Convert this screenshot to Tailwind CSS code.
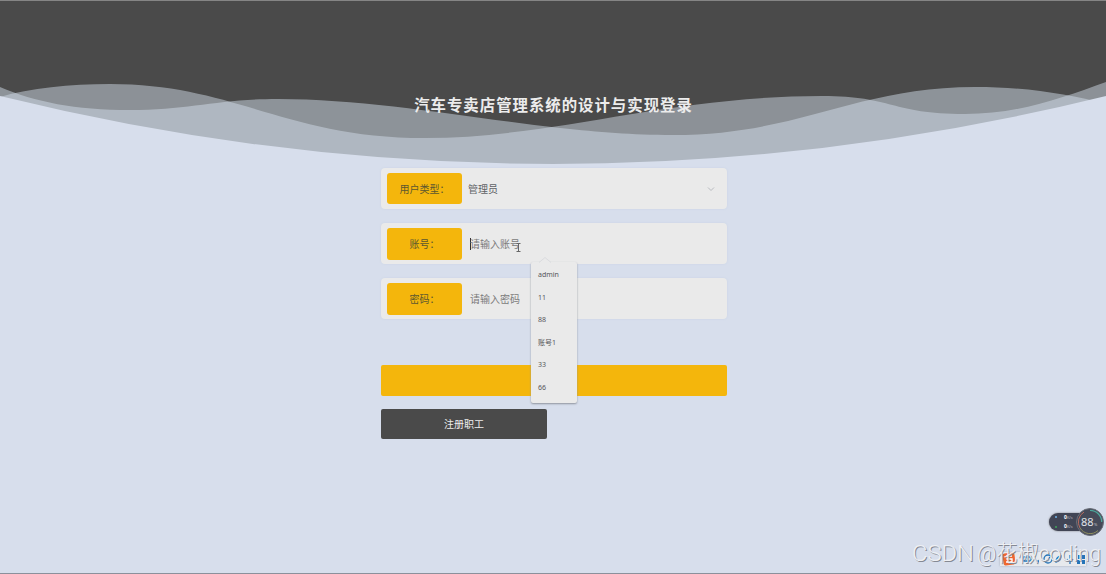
<!DOCTYPE html>
<html lang="zh-CN">

<head>
    <meta charset="UTF-8">
    <meta name="viewport" content="width=device-width, initial-scale=1.0">
    <title>汽车专卖店管理系统的设计与实现登录</title>
    <script src="https://cdn.jsdelivr.net/npm/@tailwindcss/browser@4"></script>
</head>

<body class="relative h-[574px] overflow-hidden bg-[#d7deec] font-['Noto_Sans','Noto_Sans_CJK_SC',sans-serif] text-[10px] text-[#606266]">

    <!-- Wave background -->
    <svg class="absolute inset-0" width="1106" height="574" viewBox="0 0 1106 574">
        <rect width="1106" height="180" fill="#4a4a4a" />
        <path fill="#d5e0ec" fill-opacity=".49" d="M0 87C35 102 75 110 130 110C190 110 218 99 278 99C370 99 470 118 560 128C600 132 630 135 673 135C800 135 855 87 975 87C1025 87 1068 94 1106 104V180H0Z" />
        <path fill="#d5e0ec" fill-opacity=".48" d="M0 97C30 88 70 84 110 84C235 84 285 138 425 138C555 138 665 96 822 96C894 96 890 114 965 114C1020 114 1064 97 1106 82V180H0Z" />
        <path fill="#d7deec" d="M0 96Q553 232 1106 96V181H0Z" />
        <path fill="#858585" d="M0 0H1106V1H0Z" />
        <path fill="#8b909b" d="M0 573H1106V574H0Z" />
    </svg>

    <!-- Login form -->
    <main class="relative ml-[381px] flex w-[346px] flex-col pt-[95px]">
        <h1 class="-ml-px self-center whitespace-nowrap text-[15.4px] leading-[22px] font-bold tracking-[1px] text-[#ececec]">汽车专卖店管理系统的设计与实现登录</h1>

        <div class="mt-[51px] flex flex-col gap-[14px]">
            <div class="flex h-[41px] items-center rounded-[4px] bg-[#eaeaea] px-[6px] shadow-[0_0_2px_#c9d2e4]">
                <label class="flex h-[31px] w-[75px] items-center justify-center rounded-[3px] bg-[#f4b60c] pt-px text-[#5b5630]">用户类型：</label>
                <span class="flex-1 pt-[2px] pl-[6px]">管理员</span>
                <svg class="mr-[6px]" width="8" height="6" viewBox="0 0 8 6" fill="none" stroke="#b9bbc0">
                    <path d="M1 1.5L4 4.5L7 1.5" />
                </svg>
            </div>
            <div class="relative flex h-[41px] items-center rounded-[4px] bg-[#eaeaea] px-[6px] shadow-[0_0_2px_#c9d2e4]">
                <label class="flex h-[32px] w-[75px] items-center justify-center rounded-[3px] bg-[#f4b60c] pt-px text-[#5b5630]">账号：</label>
                <span class="ml-[8px] h-[12px] w-px bg-[#333]"></span>
                <span class="-ml-px pt-px text-[#7b7b7b]">请输入账号</span>
                <!-- Text cursor -->
                <svg class="absolute top-[20px] left-[135px]" width="5" height="9" viewBox="0 0 5 9" fill="none" stroke="#666">
                    <path d="M.5 .5H4.500M2.500 .5V8.500M.5 8.500H4.500" />
                </svg>

                <!-- Autocomplete list -->
                <div class="absolute top-[39px] left-[150px] z-10 h-[141px] w-[46px] rounded-[2px] bg-[#eaeaea] pt-[2px] text-[7px] text-[#55575b] shadow-[0_1px_2px_#8f949e]">
                    <svg class="absolute -top-[5px] left-[8px]" width="12" height="6" viewBox="0 0 12 6">
                        <path fill="#eaeaea" stroke="#d4d6da" stroke-width=".7" d="M0 5.500L6 .5L12 5.500" />
                    </svg>
                    <ul class="pl-[7px] leading-[22.600px]">
                        <li>admin</li>
                        <li>11</li>
                        <li>88</li>
                        <li>账号1</li>
                        <li>33</li>
                        <li>66</li>
                    </ul>
                </div>
            </div>
            <div class="flex h-[41px] items-center rounded-[4px] bg-[#eaeaea] px-[6px] shadow-[0_0_2px_#c9d2e4]">
                <label class="flex h-[32px] w-[75px] items-center justify-center rounded-[3px] bg-[#f4b60c] pt-px text-[#5b5630]">密码：</label>
                <span class="pt-px pl-[8px] text-[#7b7b7b]">请输入密码</span>
            </div>
        </div>

        <button class="mt-[46px] h-[31px] w-[346px] rounded-[2px] bg-[#f4b60c]"></button>
        <button class="mt-[13px] h-[30px] w-[166px] rounded-[2px] bg-[#4a4a4a] text-[#ededed]">注册职工</button>
    </main>

    <!-- Network speed widget -->
    <div class="absolute top-[513px] left-[1049px] h-[18px] w-[44px] rounded-full bg-[#414555] text-[5px] font-bold text-white shadow-[0_0_2px_#777]">
        <span class="absolute top-[3px] left-[6px] size-[2px] rounded-full bg-[#6fb5e8]"></span>
        <span class="absolute top-[13px] left-[6px] size-[2px] rounded-full bg-[#3fa45c]"></span>
        <span class="absolute top-px left-[15px] leading-[7px]">0<span class="text-[4px] font-normal text-[#b5b8c2]">K/s</span></span>
        <span class="absolute top-[10px] left-[15px] leading-[7px]">0<span class="text-[4px] font-normal text-[#b5b8c2]">K/s</span></span>
    </div>
    <svg class="absolute top-[507px] left-[1075px]" width="30" height="30" viewBox="0 0 30 30" fill="none">
        <circle cx="15" cy="15" r="13.500" fill="#454a59" stroke="#6b6e78" />
        <path stroke="#b86a5f" d="M5 21A11.700 11.700 0 0 1 9 5" />
        <path stroke="#91905f" d="M5 21A11.700 11.700 0 0 0 23 23.500" />
        <path stroke="#4ba69b" stroke-width="1.300" d="M15 3.300A11.700 11.700 0 0 1 26.700 15" />
        <text x="6" y="18.500" font-size="11" fill="#e0e2e7" font-family="Noto Sans">88</text>
        <text x="19" y="18.500" font-size="4" fill="#c5c7ce" font-family="Noto Sans">%</text>
    </svg>

    <!-- Input method bar -->
    <div class="absolute top-[552px] left-[1000px] h-[14px] w-[86px] bg-[#e7e9ed] shadow-[0_0_2px_#a6abb5]">
        <svg width="86" height="14" viewBox="0 0 86 14" fill="none" stroke="#2474b8" stroke-width="1.300">
            <rect x="3" y="1" width="12" height="12" rx="2" fill="#ee6730" stroke="none" transform="rotate(-8 9 7)" />
            <path stroke="#fff" d="M12 4H7V7H12V10H6" />
            <path d="M24 5H31V9H24ZM27.500 3V12M38 8Q39 10 37 11" />
            <circle cx="48" cy="7" r="4" />
            <path d="M46 9L50 5" />
            <path fill="#2474b8" d="M56 10Q56 5 61 4Q61 9 56 10Z" />
            <path d="M70 3V8M67 7Q70 12 73 7M70 10V12" />
            <path fill="#2474b8" stroke="none" d="M78 3H81V7H78ZM82 3H85V7H82ZM77 8H80V12H77ZM82 8H85V12H82Z" />
        </svg>
    </div>

    <!-- Watermark -->
    <svg class="absolute top-[524px] left-[905px]" width="201" height="50" viewBox="0 0 201 50" font-size="22.500" font-weight="300" font-family="Roboto, Noto Sans CJK SC, sans-serif">
        <g fill="#858993" transform="translate(1 1)">
            <text x="7" y="37" textLength="62" lengthAdjust="spacingAndGlyphs">CSDN</text>
            <text x="72" y="37" textLength="124" lengthAdjust="spacingAndGlyphs">@花椒coding</text>
        </g>
        <g fill="#eef0f4">
            <text x="7" y="37" textLength="62" lengthAdjust="spacingAndGlyphs">CSDN</text>
            <text x="72" y="37" textLength="124" lengthAdjust="spacingAndGlyphs">@花椒coding</text>
        </g>
    </svg>

</body>

</html>
